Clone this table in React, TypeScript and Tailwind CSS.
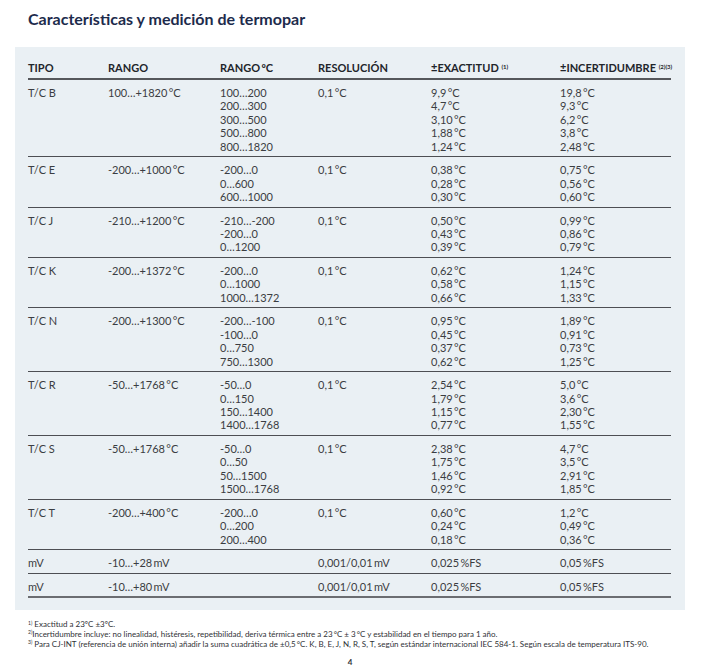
import React from "react";

type Row = {
  tipo: string;
  rango: string;
  rangos: string[];
  res: string;
  exact: string[];
  incert: string[];
};

const C = "\u2009°C";

const rows: Row[] = [
  {
    tipo: "T/C B",
    rango: "100…+1820" + C,
    rangos: ["100…200", "200…300", "300…500", "500…800", "800…1820"],
    res: "0,1" + C,
    exact: ["9,9", "4,7", "3,10", "1,88", "1,24"],
    incert: ["19,8", "9,3", "6,2", "3,8", "2,48"],
  },
  {
    tipo: "T/C E",
    rango: "-200…+1000" + C,
    rangos: ["-200…0", "0…600", "600…1000"],
    res: "0,1" + C,
    exact: ["0,38", "0,28", "0,30"],
    incert: ["0,75", "0,56", "0,60"],
  },
  {
    tipo: "T/C J",
    rango: "-210…+1200" + C,
    rangos: ["-210…-200", "-200…0", "0…1200"],
    res: "0,1" + C,
    exact: ["0,50", "0,43", "0,39"],
    incert: ["0,99", "0,86", "0,79"],
  },
  {
    tipo: "T/C K",
    rango: "-200…+1372" + C,
    rangos: ["-200…0", "0…1000", "1000…1372"],
    res: "0,1" + C,
    exact: ["0,62", "0,58", "0,66"],
    incert: ["1,24", "1,15", "1,33"],
  },
  {
    tipo: "T/C N",
    rango: "-200…+1300" + C,
    rangos: ["-200…-100", "-100…0", "0…750", "750…1300"],
    res: "0,1" + C,
    exact: ["0,95", "0,45", "0,37", "0,62"],
    incert: ["1,89", "0,91", "0,73", "1,25"],
  },
  {
    tipo: "T/C R",
    rango: "-50…+1768" + C,
    rangos: ["-50…0", "0…150", "150…1400", "1400…1768"],
    res: "0,1" + C,
    exact: ["2,54", "1,79", "1,15", "0,77"],
    incert: ["5,0", "3,6", "2,30", "1,55"],
  },
  {
    tipo: "T/C S",
    rango: "-50…+1768" + C,
    rangos: ["-50…0", "0…50", "50…1500", "1500…1768"],
    res: "0,1" + C,
    exact: ["2,38", "1,75", "1,46", "0,92"],
    incert: ["4,7", "3,5", "2,91", "1,85"],
  },
  {
    tipo: "T/C T",
    rango: "-200…+400" + C,
    rangos: ["-200…0", "0…200", "200…400"],
    res: "0,1" + C,
    exact: ["0,60", "0,24", "0,18"],
    incert: ["1,2", "0,49", "0,36"],
  },
];

const mvRows = [
  { rango: "-10…+28\u2009mV" },
  { rango: "-10…+80\u2009mV" },
];

const grid =
  "grid grid-cols-[80px_112px_98px_113px_129px_1fr] border-b border-[#4d4f53]";

function Lines({ items, unit }: { items: string[]; unit?: string }) {
  return (
    <div className="flex flex-col">
      {items.map((v, i) => (
        <span key={i}>
          {v}
          {unit}
        </span>
      ))}
    </div>
  );
}

export default function App() {
  return (
    <div className="w-[709px] h-[671px] bg-white font-['Lato','Open_Sans',sans-serif] text-[#3b3d42]">
      <h1 className="pl-[28px] pt-[8px] text-[16px] font-bold leading-[22px] text-[#1d2b4c]">
        Características y medición de termopar
      </h1>

      <div className="ml-[15px] mt-[17px] w-[670px] bg-[#eaf0f4] pl-[13px] pr-[14px] pt-[14px] pb-[12px]">
        <div className={`${grid} whitespace-nowrap border-b-2 border-[#55575b] pb-[4px] text-[11px] font-bold leading-[13px] text-[#22252b]`}>
          <span>TIPO</span>
          <span>RANGO</span>
          <span>RANGO{"\u2009"}ºC</span>
          <span>RESOLUCIÓN</span>
          <span>
            ±EXACTITUD <sup className="text-[6px]">(1)</sup>
          </span>
          <span>
            ±INCERTIDUMBRE <sup className="text-[6px]">(2)(3)</sup>
          </span>
        </div>

        <div className="text-[11px] leading-[13.4px]">
          {rows.map((r) => (
            <div key={r.tipo} className={`${grid} pt-[6px] pb-[3.2px]`}>
              <span>{r.tipo}</span>
              <span>{r.rango}</span>
              <Lines items={r.rangos} />
              <span>{r.res}</span>
              <Lines items={r.exact} unit={C} />
              <Lines items={r.incert} unit={C} />
            </div>
          ))}
          {mvRows.map((r, i) => (
            <div
              key={i}
              className={`${grid} pt-[6px] pb-[3px] ${i === 1 ? "border-b-2 border-[#6b6d71]" : ""}`}
            >
              <span>mV</span>
              <span>{r.rango}</span>
              <span />
              <span>0,001/0,01{"\u2009"}mV</span>
              <span>0,025{"\u2009"}%FS</span>
              <span>0,05{"\u2009"}%FS</span>
            </div>
          ))}
        </div>
      </div>

      <div className="pl-[28px] pt-[10px] text-[8px] leading-[9.7px] text-[#2f3136]">
        <p>
          <sup className="text-[5px]">1)</sup> Exactitud a 23ºC ±3ºC.
        </p>
        <p>
          <sup className="text-[5px]">2)</sup>Incertidumbre incluye: no linealidad, histéresis, repetibilidad, deriva térmica entre a 23{"\u2009"}°C ± 3{"\u2009"}°C y estabilidad en el tiempo para 1 año.
        </p>
        <p>
          <sup className="text-[5px]">3)</sup> Para CJ-INT (referencia de unión interna) añadir la suma cuadrática de ±0,5{"\u2009"}°C. K, B, E, J, N, R, S, T, según estándar internacional IEC 584-1. Según escala de temperatura ITS-90.
        </p>
      </div>

      <div className="mt-[7px] w-[700px] text-center text-[8px] font-bold text-[#2f3136]">4</div>
    </div>
  );
}
